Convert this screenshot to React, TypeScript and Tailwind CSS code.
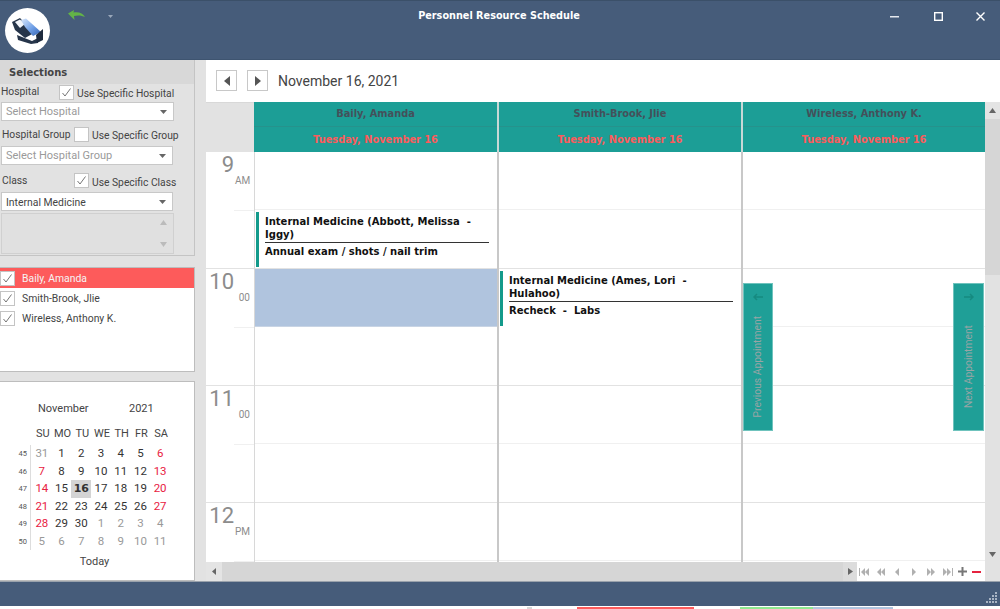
import React from "react";

const Check = ({ on = true, cls = "" }: { on?: boolean; cls?: string }) => (
  <span className={`flex h-[15px] w-[15px] shrink-0 items-center justify-center border border-[#c4c4c4] bg-white ${cls}`}>
    {on && (
      <svg width="11" height="11" viewBox="0 0 11 11" fill="none" stroke="#666" strokeWidth="0.9">
        <path d="M1.5 6 L4 9 L9.5 1.5" />
      </svg>
    )}
  </span>
);

const Caret = () => (
  <svg width="7" height="4" viewBox="0 0 7 4" className="shrink-0"><path d="M0 0H7L3.5 4Z" fill="#666" /></svg>
);

const Select = ({ text, muted, w }: { text: string; muted?: boolean; w: string }) => (
  <div className={`flex h-[19px] ${w} items-center justify-between border border-[#c8c8c8] bg-white pl-[4px] pr-[6px] ${muted ? "text-[11px] text-[#9a9a9a]" : "text-[10.4px] text-[#444]"}`}>
    <span className="pt-[2px]">{text}</span>
    <Caret />
  </div>
);

const weeks: [number, string[]][] = [
  [45, ["31", "1", "2", "3", "4", "5", "6"]],
  [46, ["7", "8", "9", "10", "11", "12", "13"]],
  [47, ["14", "15", "16", "17", "18", "19", "20"]],
  [48, ["21", "22", "23", "24", "25", "26", "27"]],
  [49, ["28", "29", "30", "1", "2", "3", "4"]],
  [50, ["5", "6", "7", "8", "9", "10", "11"]],
];

function dayColor(w: number, d: number) {
  const out = (w === 0 && d === 0) || (w === 4 && d > 2) || w === 5;
  if (out) return "text-[#999]";
  if (d === 0 || d === 6) return "text-[#e8213f]";
  return "text-[#333]";
}

const Calendar = () => (
  <div className="flex h-[200px] w-[195px] flex-col border-t border-r border-b border-[#bdbdbd] bg-white text-[#444]">
    <div className="mt-[19px] flex h-[16px] items-center text-[11px]">
      <span className="ml-[38px] w-[91px]">November</span>
      <span>2021</span>
    </div>
    <div className="ml-[33px] mt-[8px] grid h-[18px] w-[138px] grid-cols-7 items-center text-center text-[11px]">
      {["SU", "MO", "TU", "WE", "TH", "FR", "SA"].map((d) => (
        <span key={d}>{d}</span>
      ))}
    </div>
    <div className="mt-[2px] flex">
      <div className="flex w-[31px] flex-col border-r border-[#ddd]">
        {weeks.map(([n]) => (
          <div key={n} className="flex h-[17.5px] items-center justify-end pr-[2px] text-[7.5px] text-[#555]">
            <span className="mr-[1px]">{n}</span>
          </div>
        ))}
      </div>
      <div className="ml-[1px] grid w-[138px] grid-cols-7 text-center text-[11.5px]">
        {weeks.map(([n, days], w) =>
          days.map((v, d) => (
            <div
              key={`${n}-${d}`}
              className={`flex h-[17.5px] items-center justify-center ${v === "16" ? "bg-[#d4d4d4] font-['DejaVu_Sans',sans-serif] text-[11px] font-bold text-[#333]" : dayColor(w, d)}`}
            >
              {v}
            </div>
          ))
        )}
      </div>
    </div>
    <div className="ml-[1px] mt-[4px] flex h-[16px] items-center justify-center pr-[6px] text-[11px]">Today</div>
  </div>
);

const Sidebar = () => (
  <div className="flex h-[521px] w-[206px] shrink-0 flex-col bg-[#e2e2e2]">
    <div className="h-[196px] w-[195px] border-r border-b border-[#c4c4c4] bg-[#e2e2e2] text-[10.3px] text-[#444]">
      <div className="flex h-[24px] items-center bg-[#d8d8d8] pl-[9px] font-['DejaVu_Sans',sans-serif] text-[10px] font-bold">Selections</div>
      <div className="flex h-[18px] items-start">
        <span className="ml-[1px] w-[58px] shrink-0">Hospital</span>
        <Check cls="mt-[1px]" />
        <span className="ml-[3px] mt-[2px] whitespace-nowrap">Use Specific Hospital</span>
      </div>
      <div className="ml-[1px]"><Select w="w-[173px]" text="Select Hospital" muted /></div>
      <div className="mt-[5px] flex h-[19px] items-start">
        <span className="ml-[2px] mt-[1px] w-[72px] shrink-0 whitespace-nowrap">Hospital Group</span>
        <Check on={false} cls="mt-[1px]" />
        <span className="ml-[3px] mt-[2px] whitespace-nowrap">Use Specific Group</span>
      </div>
      <div className="ml-[1px] mt-[1px]"><Select w="w-[172px]" text="Select Hospital Group" muted /></div>
      <div className="mt-[8px] flex h-[19px] items-start">
        <span className="ml-[2px] w-[72px] shrink-0">Class</span>
        <Check />
        <span className="ml-[3px] mt-[2px] whitespace-nowrap">Use Specific Class</span>
      </div>
      <div className="ml-[1px]"><Select w="w-[172px]" text="Internal Medicine" /></div>
      <div className="ml-[1px] mt-[2px] flex h-[41px] w-[173px] flex-col items-end justify-between border border-[#d0d0d0] bg-[#e0e0e0] px-[6px] py-[6px]">
        <svg width="7" height="5" viewBox="0 0 7 5"><path d="M0 5H7L3.5 0Z" fill="#bbb" /></svg>
        <svg width="7" height="5" viewBox="0 0 7 5"><path d="M0 0H7L3.5 5Z" fill="#bbb" /></svg>
      </div>
    </div>
    <div className="mt-[11px] h-[105px] w-[195px] border border-l-0 border-[#bdbdbd] bg-white text-[10.4px] text-[#444]">
      {[["Baily, Amanda", true], ["Smith-Brook, Jlie", false], ["Wireless, Anthony K.", false]].map(([n, sel]) => (
        <div key={n as string} className={`flex h-[20px] items-center ${sel ? "bg-[#fd5b5b] text-[#f5f5f5]" : ""}`}>
          <Check />
          <span className="ml-[7px] pt-[1px]">{n}</span>
        </div>
      ))}
    </div>
    <div className="mt-[9px]"><Calendar /></div>
  </div>
);

const hours = [
  ["9", "AM"],
  ["10", "00"],
  ["11", "00"],
  ["12", "PM"],
];

const Appt = ({ title, sub }: { title: string; sub: string }) => (
  <div className="ml-[1px] mt-[2px] flex h-[55px] w-[233px] border-l-[3px] border-[#139a8b] bg-white pl-[6px] font-['DejaVu_Sans',sans-serif] text-[10px] font-bold leading-[13px] whitespace-pre-wrap text-[#111]">
    <div className="w-full pt-[3px]">
      <div className="h-[28px] border-b border-[#333]">{title}</div>
      <div className="mt-[2px]">{sub}</div>
    </div>
  </div>
);

const Cell = ({ selected }: { selected?: boolean }) => (
  <div className="flex h-[117px] flex-col border-b border-[#e2e2e2]">
    <div className={`h-[58px] border-b ${selected ? "border-[#c8d4e4] bg-[#b0c4de]" : "border-[#f0f0f0]"}`} />
  </div>
);

const Column = ({ idx }: { idx: number }) => (
  <div className={idx === 2 ? "w-[242px] shrink-0" : "w-[244px] shrink-0 border-r-2 border-[#c8c8c8]"}>
    {idx === 0 && (
      <>
        <div className="flex h-[117px] flex-col border-b border-[#e2e2e2]">
          <div className="h-[58px] border-b border-[#f0f0f0]" />
          <Appt title="Internal Medicine (Abbott, Melissa  -  Iggy)" sub="Annual exam / shots / nail trim" />
        </div>
        <Cell selected />
        <Cell />
        <Cell />
      </>
    )}
    {idx === 1 && (
      <>
        <Cell />
        <div className="flex h-[117px] flex-col border-b border-[#e2e2e2]">
          <Appt title="Internal Medicine (Ames, Lori  -  Hulahoo)" sub="Recheck  -  Labs" />
        </div>
        <Cell />
        <Cell />
      </>
    )}
    {idx === 2 && (
      <>
        <Cell />
        <Cell />
        <Cell />
        <Cell />
      </>
    )}
  </div>
);

const NavIcon = ({ d }: { d: string }) => (
  <svg width="12" height="8" viewBox="0 0 12 8" fill="#b0b0b0"><path d={d} /></svg>
);

const Scheduler = () => (
  <div className="relative flex h-[521px] flex-1 flex-col bg-white">
    <div className="flex h-[42px] shrink-0 items-center pb-[1px] pl-[10px]">
      <button className="flex h-[21px] w-[21px] items-center justify-center border border-[#c8c8c8] bg-white">
        <svg width="6" height="10" viewBox="0 0 6 10"><path d="M6 0V10L0 5Z" fill="#555" /></svg>
      </button>
      <button className="ml-[10px] flex h-[21px] w-[21px] items-center justify-center border border-[#c8c8c8] bg-white">
        <svg width="6" height="10" viewBox="0 0 6 10"><path d="M0 0V10L6 5Z" fill="#555" /></svg>
      </button>
      <span className="ml-[10px] pt-[1px] text-[14px] text-[#444]">November 16, 2021</span>
    </div>
    <div className="flex min-h-0 flex-1">
      <div className="flex w-[779px] shrink-0 flex-col">
        <div className="flex h-[50px] shrink-0">
          <div className="w-[48px] border-t border-[#d8d8d8] bg-[#e2e2e2]" />
          {["Baily, Amanda", "Smith-Brook, Jlie", "Wireless, Anthony K."].map((n, i) => (
            <div
              key={n}
              className={`flex shrink-0 flex-col bg-[#1c9e96] font-['DejaVu_Sans',sans-serif] text-[9.8px] font-bold ${i === 0 ? "w-[245px] border-r-2 border-[#c8d8d6]" : i === 1 ? "w-[244px] border-r-2 border-[#c8d8d6]" : "w-[242px]"}`}
            >
              <div className="flex h-[25px] items-center justify-center border-b border-[#26928c] pt-[1px] text-[#44505a]">{n}</div>
              <div className="flex h-[25px] items-center justify-center pt-[1px] text-[#fb5b5b]">Tuesday, November 16</div>
            </div>
          ))}
        </div>
        <div className="flex h-[410px] shrink-0 overflow-hidden">
          <div className="w-[49px] shrink-0 border-r border-[#d8d8d8] bg-white">
            {hours.map(([h, s]) => (
              <div key={h} className="h-[117px] border-b border-[#e2e2e2] text-[#8c8c8c]">
                <div className="flex h-[58px] justify-end pr-[4px]">
                  <span className="text-[22px] leading-[26px]">{h}</span>
                  <span className="ml-[1px] mt-[23px] w-[15px] text-right text-[10px] leading-[12px]">{s}</span>
                </div>
                <div className="ml-[28px] h-px bg-[#f0f0f0]" />
              </div>
            ))}
          </div>
          {[0, 1, 2].map((i) => (
            <Column key={i} idx={i} />
          ))}
        </div>
        <div className="flex h-[19px] shrink-0 bg-[#d6d6d6]">
          <div className="flex w-[16px] items-center justify-center bg-[#e4e4e4]">
            <svg width="4" height="7" viewBox="0 0 4 7"><path d="M4 0V7L0 3.5Z" fill="#666" /></svg>
          </div>
          <div className="flex-1" />
          <div className="flex w-[14px] items-center justify-center bg-[#dcdcdc]">
            <svg width="5" height="7" viewBox="0 0 5 7"><path d="M0 0V7L5 3.5Z" fill="#666" /></svg>
          </div>
          <div className="flex w-[128px] items-center justify-between bg-white pl-[1px] pr-[4px]">
            <NavIcon d="M1 0H2V8H1ZM7 0V8L3 4ZM11 0V8L7 4Z" />
            <NavIcon d="M6 0V8L2 4ZM10 0V8L6 4Z" />
            <NavIcon d="M8 0V8L4 4Z" />
            <NavIcon d="M4 0V8L8 4Z" />
            <NavIcon d="M2 0V8L6 4ZM6 0V8L10 4Z" />
            <NavIcon d="M1 0V8L5 4ZM5 0V8L9 4ZM10 0H11V8H10Z" />
            <svg width="9" height="9" viewBox="0 0 9 9" fill="#777"><path d="M3.5 0H5.5V3.5H9V5.5H5.5V9H3.5V5.5H0V3.5H3.5Z" /></svg>
            <svg width="9" height="2" viewBox="0 0 9 2"><path d="M0 0H9V2H0Z" fill="#e5233f" /></svg>
          </div>
        </div>
      </div>
      <div className="flex w-[15px] shrink-0 flex-col bg-[#e2e2e2]">
        <div className="flex h-[17px] items-center justify-center bg-[#e4e4e4]">
          <svg width="7" height="5" viewBox="0 0 7 5"><path d="M0 5H7L3.5 0Z" fill="#666" /></svg>
        </div>
        <div className="h-[156px] bg-[#d6d6d6]" />
        <div className="flex-1" />
        <div className="mb-[20px] flex h-[14px] items-center justify-center">
          <svg width="7" height="5" viewBox="0 0 7 5"><path d="M0 0H7L3.5 5Z" fill="#666" /></svg>
        </div>
      </div>
    </div>
    <div className="absolute left-[537px] top-[223px] flex h-[148px] w-[30px] flex-col items-center border border-[#6fc3bd] bg-[#1f9f97] pt-[9px] text-[10.3px] text-[#98a5a5]">
      <svg width="10" height="8" viewBox="0 0 10 8" fill="none" stroke="#168a80" strokeWidth="1.5"><path d="M10 4H1M4 1L1 4L4 7" /></svg>
      <span className="mt-[15px] rotate-180 whitespace-nowrap [writing-mode:vertical-rl]">Previous Appointment</span>
    </div>
    <div className="absolute left-[747px] top-[223px] flex h-[148px] w-[31px] flex-col items-center border border-[#6fc3bd] bg-[#1f9f97] pt-[9px] text-[10.3px] text-[#98a5a5]">
      <svg width="10" height="8" viewBox="0 0 10 8" fill="none" stroke="#168a80" strokeWidth="1.5"><path d="M0 4H9M6 1L9 4L6 7" /></svg>
      <span className="mt-[24px] rotate-180 whitespace-nowrap [writing-mode:vertical-rl]">Next Appointment</span>
    </div>
  </div>
);

const TitleBar = () => (
  <div className="flex h-[60px] shrink-0 items-start border-t border-b border-t-[#3b5069] border-b-[#3e5470] bg-[#465c7a] text-white">
    <div className="ml-[5px] mt-[7px] h-[45px] w-[45px] shrink-0 rounded-full bg-white">
      <svg width="45" height="45" viewBox="0 0 45 45">
        <defs>
          <linearGradient id="sheet" x1="0" y1="0" x2="1" y2="1">
            <stop offset="0" stopColor="#dbe8fa" />
            <stop offset="0.55" stopColor="#6f9fe6" />
            <stop offset="1" stopColor="#2f5fb0" />
          </linearGradient>
        </defs>
        <path d="M7 14 L15 10 L29 25 L20 30 L10 22 Z" fill="#26354a" />
        <path d="M10 14 L15 11.5 L20 16 L15 20 Z" fill="#f2f5fa" />
        <path d="M16 12 L21 10.5 L36 24 L28 28 L20 19 Z" fill="url(#sheet)" />
        <path d="M12 27 L27 33 L33 30 L33 35 L26 36 L13 32 Z" fill="#26354a" />
        <path d="M31 27 L38 21 L38 32 L32 35 Z" fill="#1e2b3e" />
      </svg>
    </div>
    <svg width="17" height="10" viewBox="0 0 17 10" className="ml-[18px] mt-[9px] shrink-0">
      <path d="M0 3.5 L6 0 L5.5 2.5 C11 1.5 15 3.5 17 7 C14 5.5 10 5 6 6 L6.5 10 Z" fill="#63b447" />
    </svg>
    <svg width="5" height="3" viewBox="0 0 5 3" className="ml-[23px] mt-[14px] shrink-0"><path d="M0 0H5L2.5 3Z" fill="#9aa8ba" /></svg>
    <div className="ml-[305px] mt-[8px] w-[162px] whitespace-nowrap text-center font-['DejaVu_Sans',sans-serif] text-[9.7px] font-bold leading-[14px]">Personnel Resource Schedule</div>
    <div className="ml-auto mt-[11px] flex items-center">
      <svg width="9" height="9" viewBox="0 0 9 9" className="mr-[35px]"><path d="M0 4H9V5.5H0Z" fill="#e4e8ee" /></svg>
      <svg width="9" height="9" viewBox="0 0 9 9" fill="none" stroke="#fff" strokeWidth="1.4" className="mr-[33px]"><rect x="0.7" y="0.7" width="7.6" height="7.6" /></svg>
      <svg width="9" height="9" viewBox="0 0 9 9" stroke="#fff" strokeWidth="1.4" className="mr-[15px]"><path d="M0.5 0.5L8.5 8.5M8.5 0.5L0.5 8.5" /></svg>
    </div>
  </div>
);

const Grip = () => (
  <svg width="12" height="12" viewBox="0 0 12 12" fill="#a8b4c4">
    {[[9, 0], [6, 3], [9, 3], [3, 6], [6, 6], [9, 6], [0, 9], [3, 9], [6, 9], [9, 9]].map(([x, y]) => (
      <rect key={`${x}${y}`} x={x} y={y} width="2" height="2" />
    ))}
  </svg>
);

export default function App() {
  return (
    <div className="flex h-[609px] w-[1000px] flex-col overflow-hidden bg-white font-['Roboto',sans-serif]">
      <TitleBar />
      <div className="flex h-[521px] shrink-0">
        <Sidebar />
        <Scheduler />
      </div>
      <div className="flex h-[25px] shrink-0 items-end justify-end border-t border-[#9aa2ac] bg-[#465c7a] pb-[2px] pr-[2px]">
        <Grip />
      </div>
      <div className="flex h-[3px] shrink-0 pt-px">
        <div className="ml-[527px] h-full w-[5px] bg-[#d8d8d8]" />
        <div className="ml-[45px] h-full w-[117px] bg-[#fd5b5b]" />
        <div className="ml-[46px] h-full w-[73px] bg-[#8fe88f]" />
        <div className="h-full w-[80px] bg-[#b0c4de]" />
      </div>
    </div>
  );
}
